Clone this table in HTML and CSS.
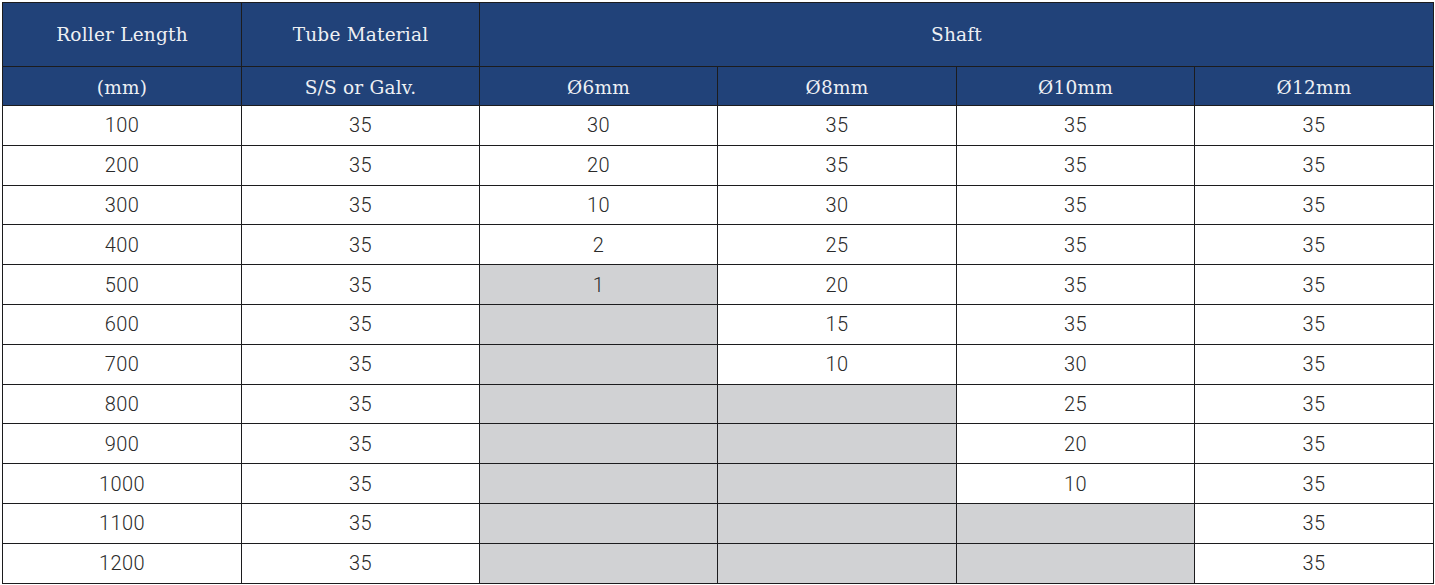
FILE: index.html
```html
<!DOCTYPE html>
<html>
<head>
<meta charset="utf-8">
<link rel="stylesheet" href="styles.css">
</head>
<body>
<table class="spec">
  <colgroup>
    <col class="c1"><col class="c2"><col class="c3"><col class="c4"><col class="c5"><col class="c6">
  </colgroup>
  <thead>
    <tr class="h1">
      <th>Roller Length</th>
      <th>Tube Material</th>
      <th colspan="4">Shaft</th>
    </tr>
    <tr class="h2">
      <th>(mm)</th>
      <th>S/S or Galv.</th>
      <th>Ø6mm</th>
      <th>Ø8mm</th>
      <th>Ø10mm</th>
      <th>Ø12mm</th>
    </tr>
  </thead>
  <tbody>
    <tr><td>100</td><td>35</td><td>30</td><td>35</td><td>35</td><td>35</td></tr>
    <tr><td>200</td><td>35</td><td>20</td><td>35</td><td>35</td><td>35</td></tr>
    <tr><td>300</td><td>35</td><td>10</td><td>30</td><td>35</td><td>35</td></tr>
    <tr><td>400</td><td>35</td><td>2</td><td>25</td><td>35</td><td>35</td></tr>
    <tr><td>500</td><td>35</td><td class="na">1</td><td>20</td><td>35</td><td>35</td></tr>
    <tr><td>600</td><td>35</td><td class="na"></td><td>15</td><td>35</td><td>35</td></tr>
    <tr><td>700</td><td>35</td><td class="na"></td><td>10</td><td>30</td><td>35</td></tr>
    <tr><td>800</td><td>35</td><td class="na"></td><td class="na"></td><td>25</td><td>35</td></tr>
    <tr><td>900</td><td>35</td><td class="na"></td><td class="na"></td><td>20</td><td>35</td></tr>
    <tr><td>1000</td><td>35</td><td class="na"></td><td class="na"></td><td>10</td><td>35</td></tr>
    <tr><td>1100</td><td>35</td><td class="na"></td><td class="na"></td><td class="na"></td><td>35</td></tr>
    <tr><td>1200</td><td>35</td><td class="na"></td><td class="na"></td><td class="na"></td><td>35</td></tr>
  </tbody>
</table>
</body>
</html>
```
FILE: styles.css
```css
html, body {
  margin: 0;
  padding: 0;
  background: #ffffff;
}
body {
  padding: 2px 0 0 2px;
}
.spec {
  border-collapse: collapse;
  table-layout: fixed;
  width: 1431px;
}
.c1 { width: 239px; }
.c2 { width: 238px; }
.c3 { width: 238px; }
.c4 { width: 239px; }
.c5 { width: 238px; }
.c6 { width: 239px; }
.spec th,
.spec td {
  border: 1px solid #1c1c1e;
  padding: 0;
  text-align: center;
  vertical-align: middle;
}
.spec th {
  background: #214279;
  color: #eef0f4;
  font-family: "DejaVu Serif", serif;
  font-weight: normal;
  font-size: 18.5px;
  letter-spacing: 0.2px;
}
.h1 { height: 64px; }
.h1 th { padding-bottom: 0; }
.h2 { height: 39px; }
.h2 th { padding-top: 2px; }
.spec td {
  height: 38.8px;
  font-family: Roboto, "Liberation Sans", sans-serif;
  font-weight: 300;
  font-size: 20px;
  color: #2a2a2a;
  background: #ffffff;
  letter-spacing: 0.4px;
}
.spec td.na {
  background: #d1d2d4;
}
```
